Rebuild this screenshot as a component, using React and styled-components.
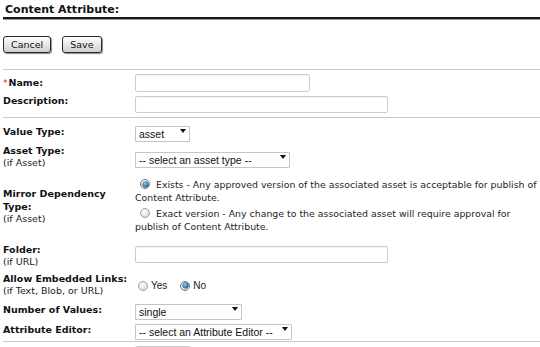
import React from 'react';
import styled, { createGlobalStyle } from 'styled-components';

const GlobalStyle = createGlobalStyle`
  body {
    margin: 0;
    background: #fff;
    font-family: "DejaVu Sans", Verdana, sans-serif;
    color: #111;
  }
`;

const Page = styled.div`
  width: 537px;
  padding-left: 3px;
`;

const Title = styled.h1`
  margin: 0;
  padding: 3px 0 0 2px;
  height: 14px;
  font-size: 11px;
  line-height: 14px;
  font-weight: bold;
  color: #111;
  border-bottom: 2px solid #151515;
  box-shadow: 0 1px 0 #9a9a9a;
`;

const Toolbar = styled.div`
  display: flex;
  gap: 11px;
  padding: 17px 0 16px;
`;

const Button = styled.button`
  height: 17px;
  padding: 0 7px;
  font-family: "DejaVu Sans", Verdana, sans-serif;
  font-size: 9.5px;
  color: #111;
  border: 1px solid #2a2a2a;
  border-radius: 3px;
  background: linear-gradient(#fdfdfd, #e6e6e6 55%, #cfcfcf);
  box-shadow: 1px 1px 1px #8c8c8c;
`;

const Divider = styled.div`
  height: 1px;
  background: #c9c9c9;
`;

const Row = styled.div`
  display: grid;
  grid-template-columns: 132px 1fr;
  height: ${(p) => p.$h}px;
  align-items: start;
`;

const Label = styled.div`
  padding: ${(p) => p.$pt || 0}px 5px 0 0;
  font-size: 9.5px;
  line-height: 13px;
  font-weight: bold;
`;

const Required = styled.span`
  color: #d21d1d;
  font-weight: normal;
  font-size: 9px;
  margin-right: 1px;
`;

const Hint = styled.span`
  display: block;
  font-weight: normal;
  line-height: 12px;
  color: #222;
`;

const Control = styled.div`
  padding-top: ${(p) => p.$pt || 0}px;
`;

const TextInput = styled.input`
  display: block;
  box-sizing: border-box;
  width: ${(p) => p.$w}px;
  height: ${(p) => p.$h || 17}px;
  margin: 0;
  border: 1px solid #cbcbcb;
  border-radius: 2px;
  background: #fff;
  box-shadow: inset 0 1px 1px rgba(0, 0, 0, 0.04);
`;

const SelectBox = styled.div`
  position: relative;
  width: ${(p) => p.$w}px;
  height: 16px;

  &::after {
    content: '';
    position: absolute;
    right: 4px;
    top: 6px;
    border-left: 3.5px solid transparent;
    border-right: 3.5px solid transparent;
    border-top: 4px solid #111;
    pointer-events: none;
  }
`;

const Select = styled.select`
  appearance: none;
  box-sizing: border-box;
  width: 100%;
  height: 16px;
  margin: 0;
  padding: 0 0 0 3px;
  border: 1px solid #c6c6c6;
  border-radius: 1px;
  background: #fff;
  font-family: "Liberation Sans", Arial, sans-serif;
  font-size: 10.5px;
  line-height: 14px;
  color: #111;
`;

const Option = styled.div`
  width: 405px;
  margin-top: ${(p) => p.$mt || 0}px;
  font-size: 9.4px;
  line-height: 13px;
  color: #1e1e1e;
  white-space: nowrap;
`;

const Radio = styled.span`
  position: relative;
  display: inline-block;
  box-sizing: border-box;
  width: 10px;
  height: 10px;
  margin: 0 3px 0 ${(p) => p.$ml ?? 5}px;
  vertical-align: -1px;
  border-radius: 50%;
  border: 1px solid ${(p) => (p.$on ? '#6f7b86' : '#a3a3a3')};
  background: radial-gradient(circle at 40% 35%, #ffffff, #e2e2e2 60%, #c4c4c4);

  &::after {
    content: '';
    display: ${(p) => (p.$on ? 'block' : 'none')};
    position: absolute;
    left: 1.5px;
    top: 1.5px;
    width: 5px;
    height: 5px;
    border-radius: 50%;
    background: radial-gradient(circle at 40% 35%, #8fd4ff, #1f7fc8 55%, #0b3f6e);
    box-shadow: 0 0 0 0.5px #15324d;
  }
`;

const Choices = styled.div`
  display: flex;
  align-items: center;
  height: 13px;
  font-family: "Liberation Sans", Arial, sans-serif;
  font-size: 10px;
  color: #1a1a1a;
`;

const Choice = styled.label`
  display: inline-flex;
  align-items: center;
  margin-right: ${(p) => p.$mr || 0}px;
`;

const Dropdown = ({ w, value }) => (
  <SelectBox $w={w}>
    <Select defaultValue={value}>
      <option>{value}</option>
    </Select>
  </SelectBox>
);

export default function App() {
  return (
    <>
      <GlobalStyle />
      <Page>
        <Title>Content Attribute:</Title>
        <Toolbar>
          <Button>Cancel</Button>
          <Button>Save</Button>
        </Toolbar>
        <Divider />

        <Row $h={23}>
          <Label $pt={6}>
            <Required>*</Required>Name:
          </Label>
          <Control $pt={4}>
            <TextInput $w={175} $h={18} />
          </Control>
        </Row>
        <Row $h={24}>
          <Label $pt={1}>Description:</Label>
          <Control $pt={3}>
            <TextInput $w={253} />
          </Control>
        </Row>
        <Divider />

        <Row $h={24}>
          <Label $pt={7}>Value Type:</Label>
          <Control $pt={5}>
            <Dropdown w={55} value="asset" />
          </Control>
        </Row>
        <Row $h={30}>
          <Label $pt={2}>
            Asset Type:
            <Hint>(if Asset)</Hint>
          </Label>
          <Control $pt={7}>
            <Dropdown w={155} value="-- select an asset type --" />
          </Control>
        </Row>
        <Row $h={68}>
          <Label $pt={15}>
            Mirror Dependency Type:
            <Hint>(if Asset)</Hint>
          </Label>
          <Control $pt={6}>
            <Option>
              <Radio $on />{' '}Exists - Any approved version of the associated asset is acceptable for publish of
              <br />
              Content Attribute.
            </Option>
            <Option $mt={2.5}>
              <Radio />{' '}Exact version - Any change to the associated asset will require approval for
              <br />
              publish of Content Attribute.
            </Option>
          </Control>
        </Row>
        <Row $h={29}>
          <Label $pt={3}>
            Folder:
            <Hint>(if URL)</Hint>
          </Label>
          <Control $pt={6}>
            <TextInput $w={253} />
          </Control>
        </Row>
        <Row $h={30}>
          <Label $pt={3}>
            Allow Embedded Links:
            <Hint>(if Text, Blob, or URL)</Hint>
          </Label>
          <Control $pt={10}>
            <Choices>
              <Choice $mr={13}>
                <Radio $ml={3} />
                Yes
              </Choice>
              <Choice>
                <Radio $on $ml={0} />
                No
              </Choice>
            </Choices>
          </Control>
        </Row>
        <Row $h={20}>
          <Label $pt={4}>Number of Values:</Label>
          <Control $pt={2}>
            <Dropdown w={107} value="single" />
          </Control>
        </Row>
        <Row $h={22}>
          <Label $pt={4}>Attribute Editor:</Label>
          <Control $pt={2}>
            <Dropdown w={157} value="-- select an Attribute Editor --" />
          </Control>
        </Row>
        <Divider />
        <Row $h={20}>
          <Label />
          <Control $pt={4}>
            <TextInput $w={56} />
          </Control>
        </Row>
      </Page>
    </>
  );
}
